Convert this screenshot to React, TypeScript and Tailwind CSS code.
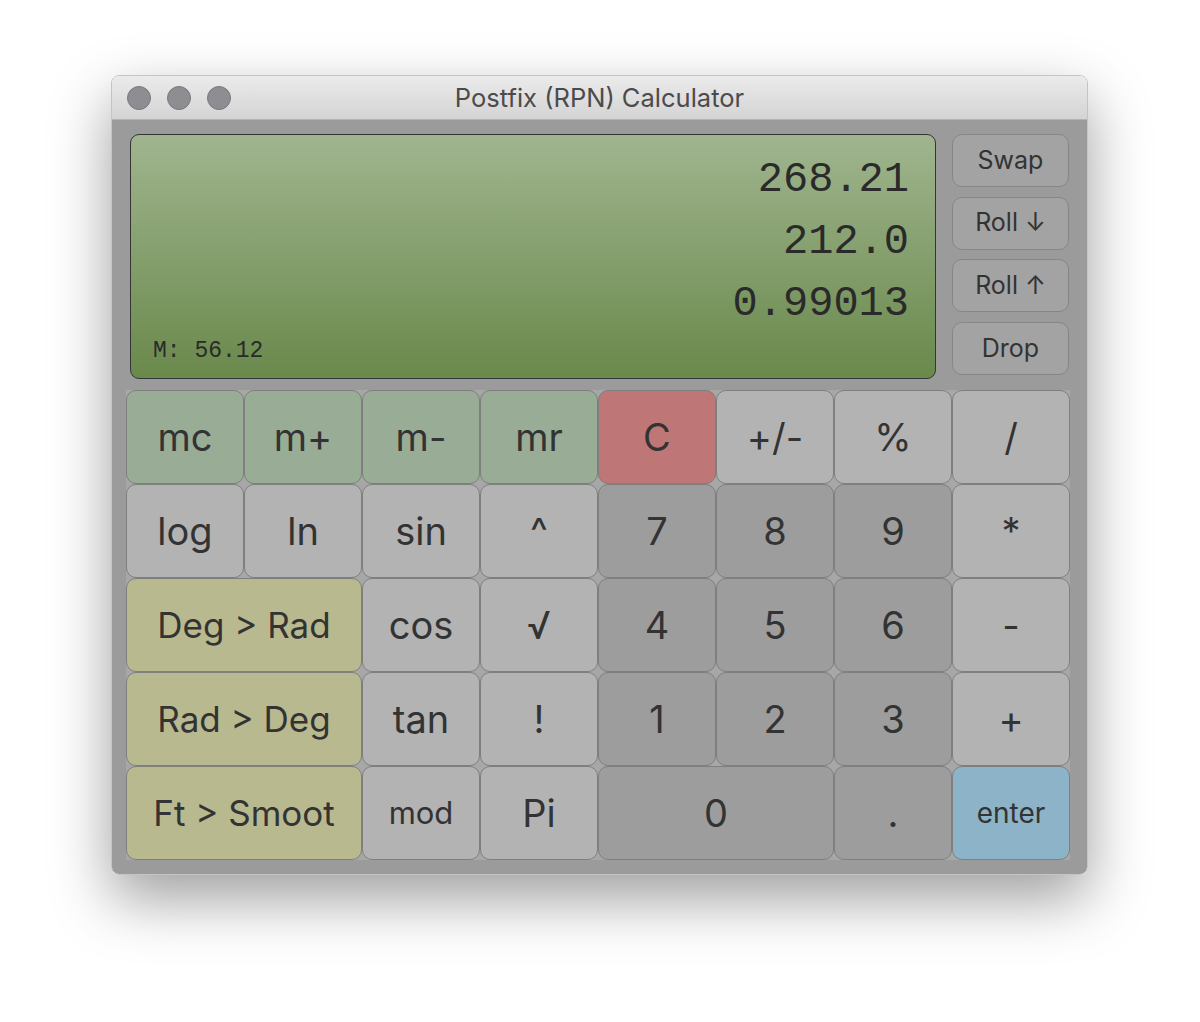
import React from "react";

type Kind = "mem" | "clear" | "fn" | "digit" | "conv" | "enter";

type Key = {
  label: string;
  kind: Kind;
  wide?: boolean;
  small?: string;
};

const keys: Key[] = [
  { label: "mc", kind: "mem" },
  { label: "m+", kind: "mem" },
  { label: "m-", kind: "mem" },
  { label: "mr", kind: "mem" },
  { label: "C", kind: "clear" },
  { label: "+/-", kind: "fn" },
  { label: "%", kind: "fn" },
  { label: "/", kind: "fn" },

  { label: "log", kind: "fn" },
  { label: "ln", kind: "fn" },
  { label: "sin", kind: "fn" },
  { label: "^", kind: "fn" },
  { label: "7", kind: "digit" },
  { label: "8", kind: "digit" },
  { label: "9", kind: "digit" },
  { label: "*", kind: "fn" },

  { label: "Deg > Rad", kind: "conv", wide: true },
  { label: "cos", kind: "fn" },
  { label: "√", kind: "fn" },
  { label: "4", kind: "digit" },
  { label: "5", kind: "digit" },
  { label: "6", kind: "digit" },
  { label: "-", kind: "fn" },

  { label: "Rad > Deg", kind: "conv", wide: true },
  { label: "tan", kind: "fn" },
  { label: "!", kind: "fn" },
  { label: "1", kind: "digit" },
  { label: "2", kind: "digit" },
  { label: "3", kind: "digit" },
  { label: "+", kind: "fn" },

  { label: "Ft > Smoot", kind: "conv", wide: true },
  { label: "mod", kind: "fn", small: "text-[31px]" },
  { label: "Pi", kind: "fn" },
  { label: "0", kind: "digit", wide: true },
  { label: ".", kind: "digit" },
  { label: "enter", kind: "enter", small: "text-[28px]" },
];

const kindStyles: Record<Kind, string> = {
  mem: "bg-[#98ac96]",
  clear: "bg-[#bf7676]",
  fn: "bg-[#b3b3b3]",
  digit: "bg-[#9d9d9d]",
  conv: "bg-[#b9b98f] text-[35px]",
  enter: "bg-[#8cb3c7]",
};

function TrafficLight() {
  return <div className="h-[24px] w-[24px] rounded-full border border-[#78787c] bg-[#8e8e92]" />;
}

function StackButton({ children }: { children: React.ReactNode }) {
  return (
    <button className="flex h-[53px] w-full items-center justify-center rounded-[10px] border border-[#868686] bg-[#a3a3a3] text-[25px] text-[#333]">
      {children}
    </button>
  );
}

export default function App() {
  const font = { fontFamily: "Inter, 'Noto Sans', sans-serif" };
  const mono = { fontFamily: "'Liberation Mono', 'DejaVu Sans Mono', monospace" };

  return (
    <div className="min-h-[1022px] w-full bg-white pt-[75px]" style={font}>
      <div className="ml-[111px] w-[977px] overflow-hidden rounded-[8px] border border-[#c4c4c4] shadow-[0_24px_60px_rgba(0,0,0,0.38)]">
        {/* title bar */}
        <div className="relative flex h-[44px] items-center border-b border-[#b4b4b4] bg-gradient-to-b from-[#ebebeb] to-[#d4d4d4] px-[15px]">
          <div className="flex gap-[16px]">
            <TrafficLight />
            <TrafficLight />
            <TrafficLight />
          </div>
          <div className="absolute inset-x-0 pt-[2px] text-center text-[25.5px] text-[#4b4b4b]">
            Postfix (RPN) Calculator
          </div>
        </div>

        {/* body */}
        <div className="bg-[#9b9b9b] px-[14px] pb-[14px] pt-[14px]">
          <div className="flex gap-[16px] pl-[4px]">
            <div className="flex h-[245px] w-[806px] flex-col rounded-[9px] border-[1.5px] border-[#353535] bg-gradient-to-b from-[#a0b58f] to-[#6a894b] pl-[22px] pr-[26px] pt-[14px] text-[#2a2a2a]">
              <div className="flex flex-col items-end text-[42px] leading-[62px]" style={mono}>
                <span>268.21</span>
                <span>212.0</span>
                <span>0.99013</span>
              </div>
              <div className="mt-auto pb-[14px] text-[23px] leading-[26px]" style={mono}>
                M: 56.12
              </div>
            </div>

            <div className="flex h-[241px] w-[117px] flex-col justify-between">
              <StackButton>Swap</StackButton>
              <StackButton>Roll ↓</StackButton>
              <StackButton>Roll ↑</StackButton>
              <StackButton>Drop</StackButton>
            </div>
          </div>

          <div className="mt-[11px] grid w-[944px] grid-cols-[repeat(8,118px)] grid-rows-[repeat(5,94px)] bg-[#a7a7a7]">
            {keys.map((k) => (
              <button
                key={k.label}
                className={`flex items-center justify-center rounded-[10px] border border-[#7f7f7f] text-[#333] ${
                  k.wide ? "col-span-2" : ""
                } ${kindStyles[k.kind]} ${k.small ?? (k.kind === "conv" ? "" : "text-[38px]")}`}
              >
                {k.label}
              </button>
            ))}
          </div>
        </div>
      </div>
    </div>
  );
}
